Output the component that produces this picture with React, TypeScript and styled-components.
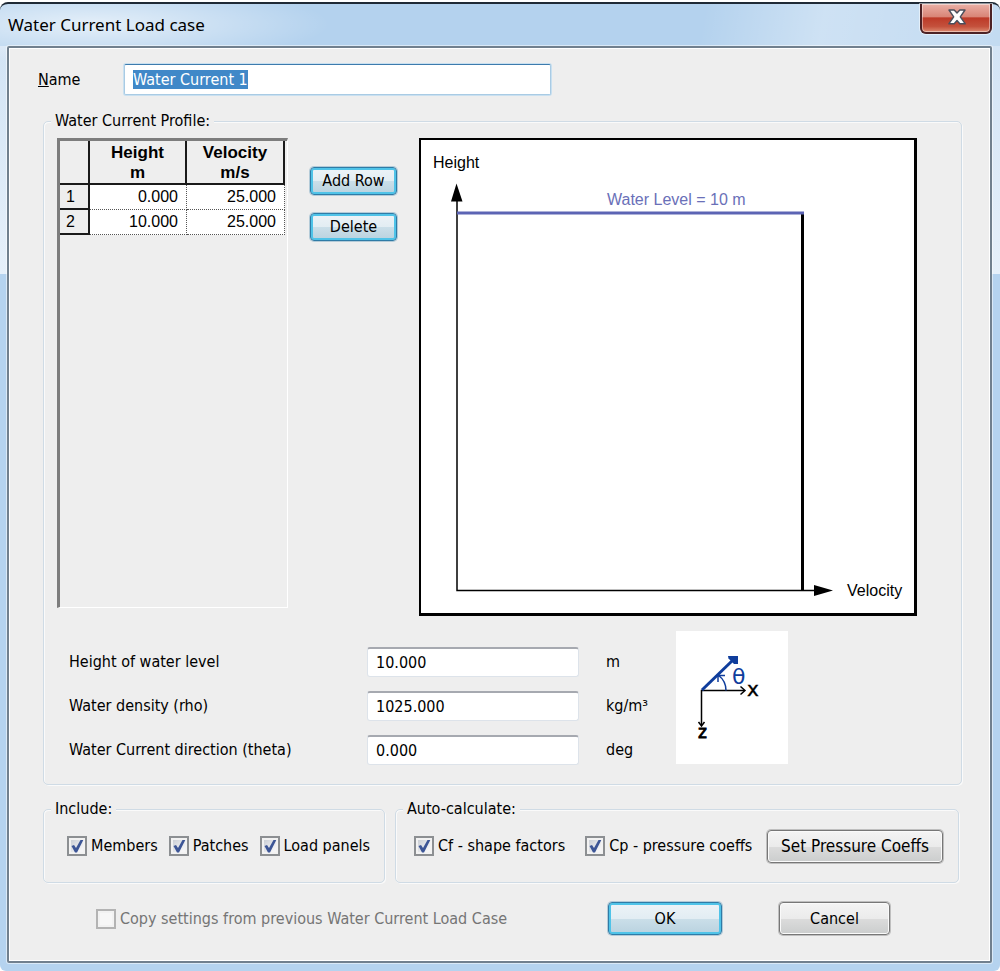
import React, { useEffect, useRef, useState } from "react";
import styled, { createGlobalStyle, css } from "styled-components";

const uiFont = `"DejaVu Sans Condensed", "Noto Sans", sans-serif`;
const gridFont = `"Liberation Sans", Arial, sans-serif`;

const GlobalStyle = createGlobalStyle`
  *, *::before, *::after { box-sizing: border-box; }
  body { margin: 0; padding-top: 2px; background: #fff; }
  input, button, table { font: inherit; color: inherit; }
`;

const Window = styled.main`
  min-height: calc(100vh - 2px);
  display: flex;
  flex-direction: column;
  padding: 0 8px 8px 7px;
  border-top: 2px solid #1f2a36;
  border-radius: 8px 8px 6px 6px;
  background:
    radial-gradient(ellipse 240px 40px at 90px 20px, rgba(255, 255, 255, 0.65), transparent),
    linear-gradient(100deg, transparent 70%, rgba(255, 255, 255, 0.35) 82%, rgba(255, 255, 255, 0.2)) 0 0 / 100% 42px no-repeat,
    linear-gradient(#b4d2ee, #b4d2ee) 0 0 / 100% 42px no-repeat,
    linear-gradient(#d3e4f5, #e6f0fa) 0 42px / 100% 228px no-repeat,
    #b5d3ef;
  color: #000;
  font: 16px/20px ${uiFont};
`;

const TitleBar = styled.header`
  display: flex;
  justify-content: space-between;
  align-items: flex-start;
  height: 42px;
`;

const Title = styled.h1`
  margin: 0;
  padding: 9px 0 0 1px;
  font: 17px/24px "Noto Sans", sans-serif;
`;

const CloseButton = styled.button`
  display: grid;
  place-items: center;
  width: 72px;
  height: 30px;
  padding: 0 0 2px 2px;
  border: 2px solid #4c2124;
  border-top: 0;
  border-radius: 0 0 6px 6px;
  background: linear-gradient(#eab0a6, #d98577 45%, #bd3a28 50%, #c4513c 80%, #dc8a70);
  box-shadow: inset 0 0 0 1px rgba(255, 255, 255, 0.45), 0 0 0 1px rgba(255, 255, 255, 0.5);
`;

const Body = styled.form`
  flex: 1;
  display: flex;
  flex-direction: column;
  padding: 16px 28px 26px 34px;
  border: 2px solid #71808e;
  border-radius: 2px;
  background: #eee;
  box-shadow: inset 0 0 0 1px #fff, 0 0 0 1px rgba(255, 255, 255, 0.5);
`;

const NameRow = styled.div`
  display: grid;
  grid-template-columns: 86px minmax(0, 427px);
  align-items: center;
  margin: 0 0 16px -5px;
`;

const NameInput = styled.input`
  height: 31px;
  padding: 0 8px;
  border: 1px solid #a9cbe4;
  border-top-color: #3d7bad;
  border-radius: 2px;
  outline: 0;
  background: #fff;
  box-shadow: 0 0 0 1px #c9e0f0;
  line-height: 22px;
  &::selection { background: #4088c8; color: #fff; }
`;

const Group = styled.fieldset`
  min-width: 0;
  margin: 0;
  padding: 0;
  border: 1px solid #cfdbe5;
  border-radius: 5px;
  box-shadow: inset 1px 1px 0 #fafafa, 1px 1px 0 #fafafa;
`;

const Legend = styled.legend`
  margin-left: 7px;
  padding: 0 4px;
  background: #eee;
`;

const GroupBody = styled.div<{ $pad: string }>`
  padding: ${(p) => p.$pad};
`;

const ProfileTop = styled.div`
  display: grid;
  grid-template-columns: 231px 87px minmax(0, 1fr);
  column-gap: 22px;
  align-items: start;
`;

const GridPane = styled.div`
  height: 470px;
  border: solid;
  border-width: 3px 1px 1px 3px;
  border-color: #7d7d7d #fff #fff #7d7d7d;
`;

const DataTable = styled.table`
  border-collapse: separate;
  border-spacing: 0;
  font: 16px/20px ${gridFont};
`;

const HeadCell = styled.th<{ $w: number }>`
  width: ${(p) => p.$w}px;
  height: 44px;
  padding: 1px 0 0;
  border: solid #1a1a1a;
  border-width: 0 2px 2px 0;
  font-size: 17px;
  font-weight: 700;
`;

const RowHead = styled.th`
  height: 25px;
  padding: 0 0 0 6px;
  border: solid #1a1a1a;
  border-width: 0 2px 2px 0;
  font-weight: 400;
  text-align: left;
`;

const Cell = styled.td`
  height: 25px;
  padding: 0 8px 0 0;
  border: dotted #555;
  border-width: 0 1px 1px 0;
  background: #fff;
  text-align: right;
`;

const RowButtons = styled.div`
  display: grid;
  gap: 18px;
  padding-top: 29px;
`;

const Button = styled.button<{ $tone?: "active"; $w?: number; $h: number; $size?: number }>`
  width: ${(p) => (p.$w ? `${p.$w}px` : "100%")};
  height: ${(p) => p.$h}px;
  padding: 0;
  border: 1px solid #777;
  border-radius: 4px;
  font-size: ${(p) => p.$size ?? 16}px;
  white-space: nowrap;
  background: linear-gradient(#f4f4f4, #ebebeb 50%, #dcdcdc 50%, #cbcdcd);
  box-shadow: inset 0 0 0 1px #fafafa, 0 0 0 1px rgba(119, 119, 119, 0.4);
  ${(p) =>
    p.$tone === "active" &&
    css`
      border-color: #2f7ba6;
      background: linear-gradient(#edf3f7, #e2edf3 50%, #cbdfe9 50%, #b9d2df);
      box-shadow: inset 0 0 0 2px #4fc3e8, 0 0 0 1px rgba(47, 123, 166, 0.3);
    `}
`;

const Chart = styled.svg`
  display: block;
  width: 100%;
  height: auto;
  font: 16px ${gridFont};
`;

const ProfileBottom = styled.div`
  display: flex;
  flex-wrap: wrap;
  gap: 16px 44px;
  padding: 15px 0 0 12px;
`;

const Fields = styled.div`
  display: grid;
  grid-template-columns: 298px 212px 53px;
  grid-auto-rows: 30px;
  row-gap: 14px;
  align-items: center;
  padding-top: 16px;
`;

const FieldInput = styled.input`
  min-width: 0;
  height: 30px;
  padding: 0 8px;
  border: 1px solid #dde3ea;
  border-top: 2px solid #a6a9b0;
  border-radius: 3px;
  background: #fff;
`;

const Unit = styled.span`
  padding-left: 27px;
  white-space: nowrap;
`;

const Compass = styled.svg`
  display: block;
  width: 112px;
  height: 133px;
  background: #fff;
`;

const OptionGroups = styled.div`
  display: grid;
  grid-template-columns: 342px minmax(0, 1fr);
  gap: 10px;
  padding: 14px 3px 0 0;
`;

const Options = styled.div`
  display: flex;
  align-items: center;
  justify-content: space-between;
  height: 34px;
`;

const Checks = styled.div<{ $gap: number }>`
  display: flex;
  gap: ${(p) => p.$gap}px;
`;

const CheckLabel = styled.label<{ $off?: boolean }>`
  display: flex;
  align-items: center;
  gap: 4px;
  white-space: nowrap;
  color: ${(p) => (p.$off ? "#757575" : "inherit")};
`;

const CheckBox = styled.span`
  display: grid;
  width: 20px;
  height: 20px;
  & > * { grid-area: 1 / 1; }
  svg { pointer-events: none; }
  input:not(:checked) + svg { visibility: hidden; }
`;

const CheckInput = styled.input`
  appearance: none;
  width: 20px;
  height: 20px;
  margin: 0;
  border: 2px solid #8c8f92;
  background: linear-gradient(135deg, #c2c7cf, #f4f4f6 75%);
  box-shadow: inset 0 0 0 2px #f2f2f2;
  &:disabled { border: 2px solid #b3b3b3; background: #f7f7f7; }
`;

const Footer = styled.div`
  display: flex;
  align-items: center;
  justify-content: space-between;
  padding: 19px 72px 0 53px;
`;

const FooterButtons = styled.div`
  display: flex;
  gap: 57px;
`;

function Check({ text, on = false, off = false }: { text: string; on?: boolean; off?: boolean }) {
  return (
    <CheckLabel $off={off}>
      <CheckBox>
        <CheckInput type="checkbox" defaultChecked={on} disabled={off} />
        <svg viewBox="0 0 20 20" aria-hidden="true">
          <path d="M4.500 10 L7 9 L9 12 L13.500 4 L16.300 4 L10 16.500 L8 16.500 Z" fill="#3c5596" />
        </svg>
      </CheckBox>
      {text}
    </CheckLabel>
  );
}

const rows = [
  ["0.000", "25.000"],
  ["10.000", "25.000"],
];

const fields = [
  { id: "level", label: "Height of water level", value: "10.000", unit: "m" },
  { id: "rho", label: "Water density (rho)", value: "1025.000", unit: "kg/m³" },
  { id: "theta", label: "Water Current direction (theta)", value: "0.000", unit: "deg" },
];

export default function App() {
  const nameRef = useRef<HTMLInputElement>(null);
  const [name, setName] = useState("Water Current 1");

  useEffect(() => {
    nameRef.current?.focus();
    nameRef.current?.select();
  }, []);

  return (
    <>
      <GlobalStyle />
      <Window>
        <TitleBar>
          <Title>Water Current Load case</Title>
          <CloseButton type="button" aria-label="Close">
            <svg width="18" height="16" viewBox="0 0 18 16" aria-hidden="true">
              <path
                d="M1 1H6.200L9 4L11.800 1H17L12.300 7.800L17.300 14.800H11.800L9 11.500L6.200 14.800H0.800L5.700 7.800Z"
                fill="#fff"
                stroke="#4a4f5c"
                strokeWidth="1.400"
                strokeLinejoin="round"
              />
            </svg>
          </CloseButton>
        </TitleBar>

        <Body onSubmit={(e) => e.preventDefault()}>
          <NameRow>
            <label htmlFor="name">
              <u>N</u>ame
            </label>
            <NameInput id="name" ref={nameRef} value={name} onChange={(e) => setName(e.target.value)} />
          </NameRow>

          <Group>
            <Legend>Water Current Profile:</Legend>
            <GroupBody $pad="7px 44px 19px 13px">
              <ProfileTop>
                <GridPane>
                  <DataTable>
                    <thead>
                      <tr>
                        <HeadCell $w={30} />
                        <HeadCell $w={97} scope="col">Height<br />m</HeadCell>
                        <HeadCell $w={98} scope="col">Velocity<br />m/s</HeadCell>
                      </tr>
                    </thead>
                    <tbody>
                      {rows.map((r, i) => (
                        <tr key={i}>
                          <RowHead scope="row">{i + 1}</RowHead>
                          <Cell>{r[0]}</Cell>
                          <Cell>{r[1]}</Cell>
                        </tr>
                      ))}
                    </tbody>
                  </DataTable>
                </GridPane>

                <RowButtons>
                  <Button type="button" $tone="active" $h={28}>Add Row</Button>
                  <Button type="button" $tone="active" $h={28}>Delete</Button>
                </RowButtons>

                <Chart viewBox="0 0 498 478" role="img" aria-label="Velocity against height">
                  <rect width="498" height="478" fill="#000" />
                  <rect x="2" y="2" width="493" height="473" fill="#fff" />
                  <path d="M38 60V452.500H398" fill="none" stroke="#000" strokeWidth="1.5" />
                  <path d="M37.500 45.500L43.500 63.500H32z M414 452.500L395 447v11z" fill="#000" />
                  <path d="M383.500 76V453" stroke="#000" strokeWidth="3" />
                  <path d="M38 75H385" stroke="#5c64b4" strokeWidth="3" />
                  <text x="14" y="30">Height</text>
                  <text x="188" y="67" fill="#6a70b8">Water Level = 10 m</text>
                  <text x="428" y="458">Velocity</text>
                </Chart>
              </ProfileTop>

              <ProfileBottom>
                <Fields>
                  {fields.map((f) => (
                    <React.Fragment key={f.id}>
                      <label htmlFor={f.id}>{f.label}</label>
                      <FieldInput id={f.id} defaultValue={f.value} />
                      <Unit>{f.unit}</Unit>
                    </React.Fragment>
                  ))}
                </Fields>
                <Compass viewBox="0 0 112 133" role="img" aria-label="Theta measured from x axis">
                  <path d="M25.500 94V59.500H68" fill="none" stroke="#000" strokeWidth="1.5" />
                  <path d="M64.500 55.500L69 59.500L64.500 63.500M22.500 91L25.500 95L28.500 91" fill="none" stroke="#000" strokeWidth="1.5" />
                  <path d="M26 59L57 29" stroke="#0f3d9c" strokeWidth="3" />
                  <path d="M52 25H62V33H58L52.500 27.500z" fill="#0f3d9c" />
                  <path d="M50 59.500C50 52 47.500 48 42 44M49 44.500H41M42 43V51" fill="none" stroke="#0f3d9c" strokeWidth="1.5" />
                  <text x="56" y="53" fontFamily="DejaVu Sans" fontSize="22" fill="#0f3d9c">θ</text>
                  <text x="71" y="65" fontFamily="DejaVu Sans" fontSize="20" stroke="#000" strokeWidth="0.4">x</text>
                  <text x="22" y="107" fontFamily="DejaVu Sans" fontSize="17" stroke="#000" strokeWidth="0.8">z</text>
                </Compass>
              </ProfileBottom>
            </GroupBody>
          </Group>

          <OptionGroups>
            <Group>
              <Legend>Include:</Legend>
              <GroupBody $pad="10px 12px 19px 23px">
                <Options>
                  <Checks $gap={11}>
                    <Check text="Members" on />
                    <Check text="Patches" on />
                    <Check text="Load panels" on />
                  </Checks>
                </Options>
              </GroupBody>
            </Group>
            <Group>
              <Legend>Auto-calculate:</Legend>
              <GroupBody $pad="10px 15px 19px 18px">
                <Options>
                  <Checks $gap={20}>
                    <Check text="Cf - shape factors" on />
                    <Check text="Cp - pressure coeffs" on />
                  </Checks>
                  <Button type="button" $w={176} $h={33} $size={17}>Set Pressure Coeffs</Button>
                </Options>
              </GroupBody>
            </Group>
          </OptionGroups>

          <Footer>
            <Check text="Copy settings from previous Water Current Load Case" off />
            <FooterButtons>
              <Button type="submit" $tone="active" $w={114} $h={33}>OK</Button>
              <Button type="button" $w={111} $h={33}>Cancel</Button>
            </FooterButtons>
          </Footer>
        </Body>
      </Window>
    </>
  );
}
